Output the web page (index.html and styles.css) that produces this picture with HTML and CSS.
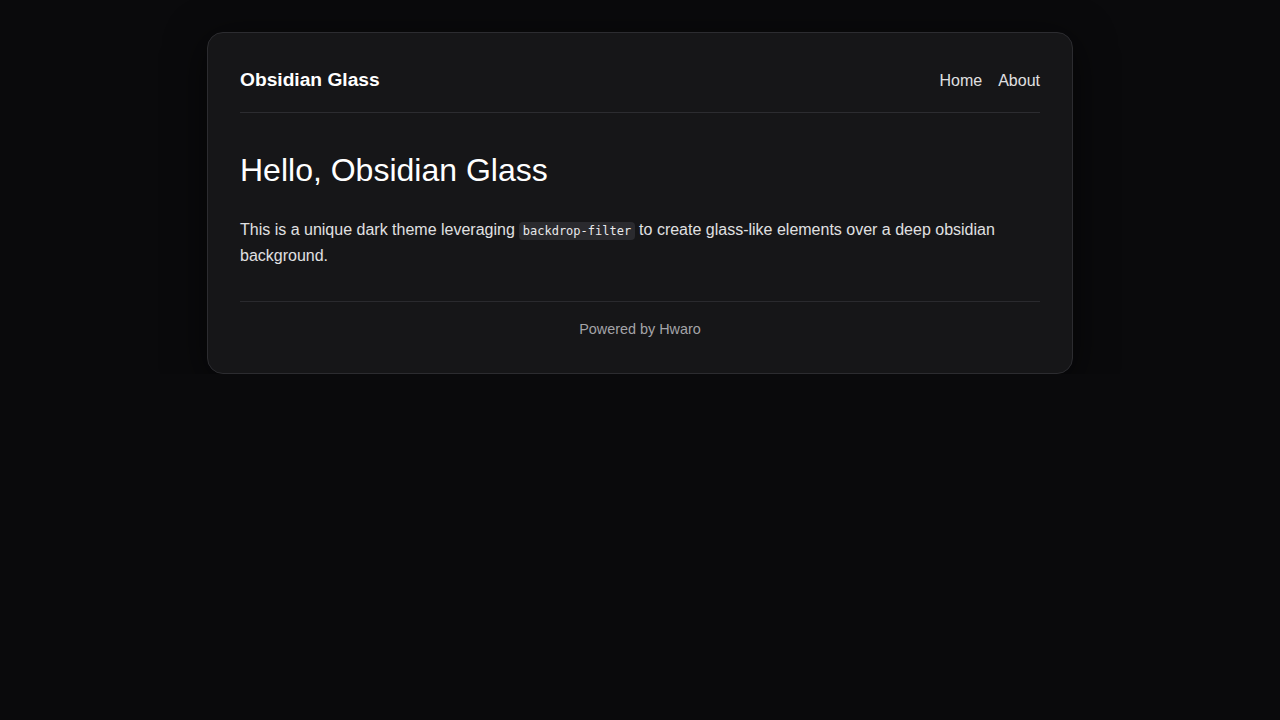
FILE: index.html
```html
<!DOCTYPE html>
<html lang="en">
<head>
<meta charset="utf-8">
<title>Obsidian Glass</title>
<link rel="stylesheet" href="styles.css">
</head>
<body>
<div class="card">
  <header class="header">
    <a class="brand" href="#">Obsidian Glass</a>
    <nav class="nav">
      <a href="#">Home</a>
      <a href="#">About</a>
    </nav>
  </header>
  <main class="main">
    <h1 class="title">Hello, Obsidian Glass</h1>
    <p class="text">This is a unique dark theme leveraging <code class="code">backdrop-filter</code> to create glass-like elements over a deep obsidian background.</p>
  </main>
  <footer class="footer">Powered by Hwaro</footer>
</div>
</body>
</html>
```
FILE: styles.css
```css
html, body {
  margin: 0;
  padding: 0;
  background: #0a0a0c;
  min-height: 100%;
}
body {
  font-family: "Liberation Sans", Arial, sans-serif;
  color: #e0e0e2;
  font-size: 16px;
  line-height: 1.6;
  padding-top: 32px;
}
.card {
  box-sizing: border-box;
  width: 866px;
  margin: 0 auto;
  padding: 32px 32px 32px;
  background: #161618;
  border: 1px solid #2c2c30;
  border-radius: 16px;
  box-shadow: 0 8px 40px rgba(0, 0, 0, 0.6);
}
.header {
  display: flex;
  justify-content: space-between;
  align-items: center;
  padding-bottom: 16px;
  border-bottom: 1px solid #2c2c30;
}
.brand {
  font-size: 19.2px;
  font-weight: 700;
  color: #ffffff;
  text-decoration: none;
}
.nav {
  display: flex;
  gap: 16px;
}
.nav a {
  color: #e0e0e2;
  text-decoration: none;
}
.main {
  padding-top: 38px;
}
.title {
  margin: 0;
  font-size: 32px;
  font-weight: 400;
  line-height: 1.2;
  color: #ffffff;
}
.text {
  margin: 28px 0 0;
  line-height: 25.6px;
}
.code {
  font-family: "DejaVu Sans Mono", monospace;
  font-size: 12px;
  line-height: 1;
  background: #2a2a2e;
  color: #e8e8ea;
  padding: 2px 3.5px;
  border-radius: 4px;
}
.footer {
  margin-top: 33px;
  padding-top: 16px;
  border-top: 1px solid #2a2a2e;
  text-align: center;
  font-size: 14.4px;
  line-height: 23px;
  color: #a4a4a8;
}
```
